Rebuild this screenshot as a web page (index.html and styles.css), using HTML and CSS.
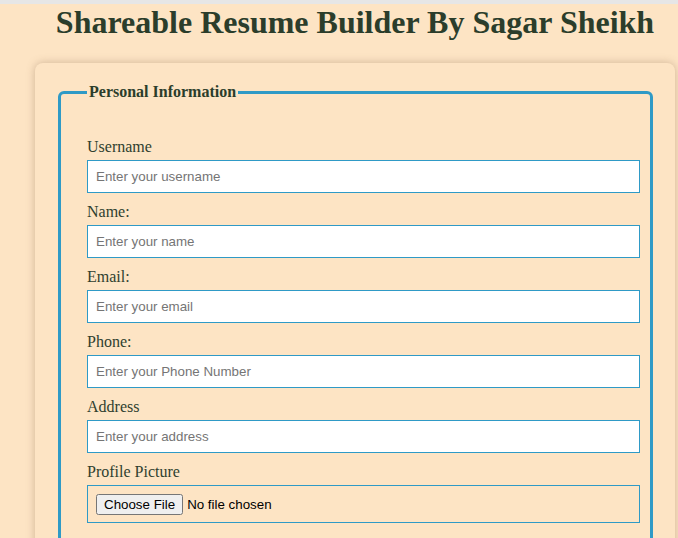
FILE: index.html
```html
<!DOCTYPE html>
<html lang="en">
<head>
<meta charset="utf-8">
<title>Shareable Resume Builder</title>
<link rel="stylesheet" href="styles.css">
</head>
<body>
<div class="topbar"></div>
<main class="page">
  <h1 class="title">Shareable Resume Builder By Sagar Sheikh</h1>
  <form class="card">
    <fieldset class="section">
      <legend class="legend">Personal Information</legend>
      <label class="label" for="username">Username</label>
      <input class="field" id="username" type="text" placeholder="Enter your username">
      <label class="label" for="name">Name:</label>
      <input class="field" id="name" type="text" placeholder="Enter your name">
      <label class="label" for="email">Email:</label>
      <input class="field" id="email" type="email" placeholder="Enter your email">
      <label class="label" for="phone">Phone:</label>
      <input class="field" id="phone" type="tel" placeholder="Enter your Phone Number">
      <label class="label" for="address">Address</label>
      <input class="field" id="address" type="text" placeholder="Enter your address">
      <label class="label" for="pic">Profile Picture</label>
      <input class="field file" id="pic" type="file">
    </fieldset>
  </form>
</main>
</body>
</html>
```
FILE: styles.css
```css
html, body {
  margin: 0;
  padding: 0;
  background: #fde4c4;
  overflow: hidden;
}
body {
  font-family: "Liberation Serif", "Times New Roman", serif;
  color: #2c3e2c;
}
.topbar {
  height: 4px;
  background: #e6e6e6;
}
.page {
  margin-left: 35px;
  width: 640px;
}
.title {
  margin: 0;
  font-size: 32px;
  font-weight: bold;
  text-align: center;
  color: #2b3d2b;
  line-height: 37px;
}
.card {
  margin-top: 22px;
  background: #fde4c4;
  border-radius: 8px;
  box-shadow: 0 0 8px rgba(120, 90, 60, 0.35);
  padding: 20px 22px 40px 23px;
}
.section {
  margin: 0;
  border: 3px solid #2f9ac6;
  border-radius: 6px;
  padding: 37px 10px 40px 26px;
  display: flex;
  flex-direction: column;
}
.legend {
  font-size: 16px;
  font-weight: bold;
  color: #2b3d2b;
  padding: 0 2px;
}
.label {
  font-size: 16px;
  line-height: 18px;
  margin-bottom: 4px;
  color: #2f3f2f;
}
.field {
  box-sizing: border-box;
  height: 33px;
  margin: 0 0 10px 0;
  border: 1px solid #2f9ac6;
  background: #fff;
  padding: 0 8px;
  font-family: "Liberation Sans", Arial, sans-serif;
  font-size: 13.33px;
  color: #000;
  outline: none;
}
.field::placeholder {
  color: #757575;
}
.file {
  height: 38px;
  background: transparent;
  padding: 8px 8px;
}
```
